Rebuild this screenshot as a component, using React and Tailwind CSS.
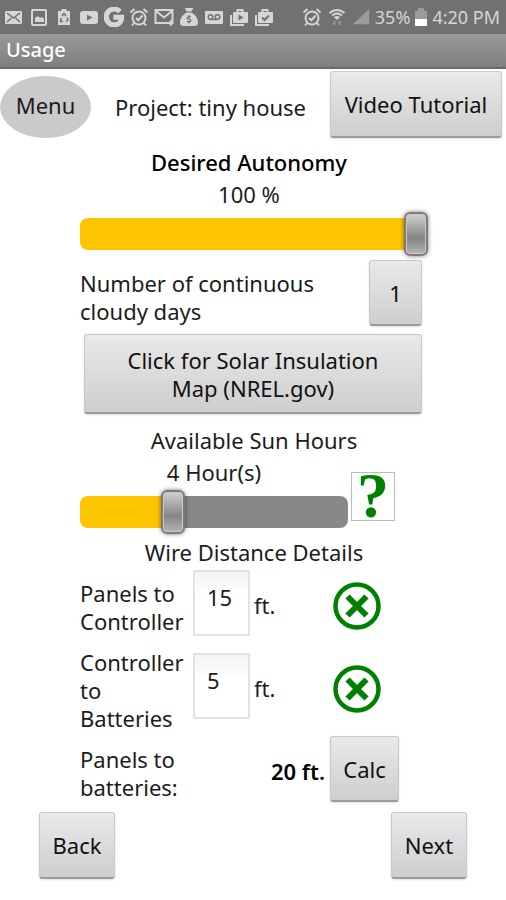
import { useState } from "react";
import { FaGoogle } from "react-icons/fa";
import { FaSackDollar } from "react-icons/fa6";

const buttonClass =
    "rounded-[3px] border border-[#c9c9c9] border-b-2 border-b-[#9c9c9c] bg-linear-to-b from-[#e9e9e9] to-[#cecece] text-[#111] shadow-sm active:from-[#d0d0d0]";

function Alarm() {
    return (
        <svg viewBox="0 0 20 20" className="w-5 h-5" fill="none" stroke="currentColor" strokeWidth="2">
            <circle cx="10" cy="11" r="6.5" />
            <path d="M7 11l2.3 2.3L13.5 8.500M1.500 5.500L5.500 2M18.500 5.500L14.500 2M5 16l-2 2.500M15 16l2 2.500" />
        </svg>
    );
}

function Bag({ children }) {
    return (
        <svg viewBox="0 0 20 20" className="w-5 h-5" fill="none" stroke="currentColor" strokeWidth="2">
            <path d="M2 8v10h13" />
            <path d="M8.500 5V3h5v2" />
            <rect x="4" y="5" width="15" height="11" rx="1" fill="currentColor" stroke="none" />
            {children}
        </svg>
    );
}

function StatusBar() {
    return (
        <div className="h-[34px] pl-1 pr-1.5 flex items-center justify-between bg-[#717171] text-[#d6d6d6] text-lg">
            <div className="flex items-center gap-[5px]">
                <svg viewBox="0 0 20 20" className="w-5 h-5">
                    <rect x="1" y="4" width="17" height="13" rx="1" fill="currentColor" />
                    <path d="M3 6l6.500 5L16 6M3 15l4.500-4M16 15l-4.500-4" fill="none" stroke="#717171" strokeWidth="1.5" />
                </svg>
                <svg viewBox="0 0 20 20" className="w-5 h-5">
                    <rect x="3" y="3" width="14" height="15" rx="1" fill="none" stroke="currentColor" strokeWidth="2" />
                    <path d="M6 15V11l3-2 2 2 2-1 2 2v3z" fill="currentColor" />
                </svg>
                <svg viewBox="0 0 20 20" className="w-5 h-5">
                    <path d="M4 4h3.500V2h5v2H16v14H4z" fill="currentColor" />
                    <path d="M8 9l2-2.500L12 9M13 10.500l1 2.500-2 1.500M9 14.500H6.500L7 11" fill="none" stroke="#717171" strokeWidth="1.5" />
                </svg>
                <svg viewBox="0 0 20 20" className="w-5 h-5">
                    <rect x="1" y="4" width="18" height="13" rx="3" fill="currentColor" />
                    <path d="M8 7.500v6l5.500-3z" fill="#717171" />
                </svg>
                <FaGoogle className="w-5 h-5" stroke="currentColor" strokeWidth="40" />
                <Alarm />
                <svg viewBox="0 0 20 20" className="w-5 h-5" fill="none" stroke="currentColor" strokeWidth="2">
                    <path d="M13 16H1.500V3h17v12M2 4l8 6.500L18 4M12 16h6M16 13.500l2.500 2.500-2.500 2.500" />
                </svg>
                <FaSackDollar className="w-5 h-[18px]" />
                <svg viewBox="0 0 20 20" className="w-5 h-5">
                    <rect x="1" y="4" width="18" height="13" rx="1" fill="currentColor" />
                    <g fill="none" stroke="#717171" strokeWidth="1.5">
                        <circle cx="6.500" cy="10" r="2.300" />
                        <circle cx="13.500" cy="10" r="2.300" />
                        <path d="M6.500 12.500h7" />
                    </g>
                </svg>
                <Bag>
                    <path d="M9.500 7.500v6l5-3z" fill="#717171" stroke="none" />
                </Bag>
                <Bag>
                    <path d="M8 10.500l2.500 2.500L15 8.500" stroke="#717171" />
                </Bag>
            </div>
            <div className="flex items-center gap-[5px] whitespace-nowrap">
                <Alarm />
                <svg viewBox="0 0 20 20" className="w-5 h-5" fill="none" stroke="currentColor" strokeWidth="2">
                    <path d="M2.500 6c4.500-4 10.500-4 15 0M5 8.500c3-2.500 7-2.500 10 0M7.500 11c1.500-1.300 3.500-1.300 5 0" />
                    <path d="M10 11v1.500" />
                    <path d="M7.500 14v4M12.500 14v4" stroke="#9c9c9c" />
                </svg>
                <svg viewBox="0 0 20 20" className="w-[18px] h-5">
                    <path d="M1 18L19 1v17z" fill="#9c9c9c" />
                </svg>
                <span>35%</span>
                <svg viewBox="0 0 12 20" className="w-3 h-5">
                    <path d="M0 4h3V1h6v3h3v8H0z" fill="#9c9c9c" />
                    <path d="M0 12h12v7H0z" fill="#fff" />
                </svg>
                <span>4:20 PM</span>
            </div>
        </div>
    );
}

function Slider({ label, value, max, onChange }) {
    return (
        <input
            type="range"
            aria-label={label}
            min="0"
            max={max}
            value={value}
            onChange={(e) => onChange(Number(e.target.value))}
            style={{ "--fill": `${(value / max) * 100}%` }}
            className="block w-full h-11 appearance-none bg-transparent [&::-webkit-slider-runnable-track]:h-8 [&::-webkit-slider-runnable-track]:rounded-lg [&::-webkit-slider-runnable-track]:bg-[linear-gradient(to_right,#fdc500_var(--fill),#888_var(--fill))] [&::-webkit-slider-thumb]:appearance-none [&::-webkit-slider-thumb]:-mt-1.5 [&::-webkit-slider-thumb]:w-6 [&::-webkit-slider-thumb]:h-11 [&::-webkit-slider-thumb]:rounded-md [&::-webkit-slider-thumb]:border-2 [&::-webkit-slider-thumb]:border-[#7c7c7c] [&::-webkit-slider-thumb]:bg-[linear-gradient(#d0d0d0,#858585_60%,#b4b4b4)] [&::-webkit-slider-thumb]:shadow-[inset_0_0_0_1px_#c8c8c8,0_0_4px_#0008]"
        />
    );
}

function DistanceRow({ id, label, value, onChange, onClear }) {
    return (
        <div className="flex items-center">
            <label htmlFor={id} className="w-[113px] pt-2">{label}</label>
            <input
                id={id}
                value={value}
                onChange={(e) => onChange(e.target.value)}
                className="w-[57px] h-[66px] pl-3 pb-3 border-2 border-[#e2e2e2] bg-linear-to-b from-[#f4f4f4] to-white to-40%"
            />
            <span className="w-[83px] pl-1 pt-1">ft.</span>
            <button type="button" aria-label={`Clear ${id}`} onClick={onClear} className="pt-1.5">
                <svg viewBox="0 0 48 48" className="w-12 h-12" fill="none" stroke="#008000">
                    <circle cx="24" cy="24" r="21.500" strokeWidth="4.500" />
                    <path d="M14.500 14.500l19 19M33.500 14.500l-19 19" strokeWidth="6" />
                </svg>
            </button>
        </div>
    );
}

export default function App() {
    const [autonomy, setAutonomy] = useState(100);
    const [cloudyDays, setCloudyDays] = useState(1);
    const [sunHours, setSunHours] = useState(4);
    const [toController, setToController] = useState("15");
    const [toBatteries, setToBatteries] = useState("5");

    const total = Number(toController) + Number(toBatteries);

    return (
        <div className="min-h-screen bg-white text-[#1c1c1c] font-['Noto_Sans',sans-serif] text-[22px] leading-7">
            <StatusBar />
            <h1 className="h-[35px] px-1.5 border-b-2 border-[#6a6a6a] bg-linear-to-b from-[#9a9a9a] to-[#7e7e7e] text-white text-xl leading-8 font-medium">
                Usage
            </h1>

            <div className="flex items-center justify-between pr-1 pt-0.5">
                <button type="button" className="w-[91px] h-[62px] mt-1 pb-1 rounded-[50%] bg-[#cacaca]">Menu</button>
                <p className="pt-1">Project: tiny house</p>
                <button type="button" className={`${buttonClass} w-[172px] h-[67px]`}>Video Tutorial</button>
            </div>

            <main className="pl-20 pr-[78px] pt-2.5">
                <div className="text-center pr-2.5 pb-1">
                    <h2 className="font-medium text-black">Desired Autonomy</h2>
                    <p className="pt-1">{autonomy} %</p>
                </div>
                <Slider label="Desired Autonomy" value={autonomy} max={100} onChange={setAutonomy} />

                <div className="flex items-center justify-between pt-1 pr-1.5">
                    <p className="w-[250px] pt-2">Number of continuous cloudy days</p>
                    <button
                        type="button"
                        onClick={() => setCloudyDays(cloudyDays + 1)}
                        className={`${buttonClass} w-[53px] h-[66px]`}
                    >
                        {cloudyDays}
                    </button>
                </div>

                <div className="pt-2 pl-1 pr-1.5">
                    <button type="button" className={`${buttonClass} w-full h-20 px-6`}>
                        Click for Solar Insulation Map (NREL.gov)
                    </button>
                </div>

                <h2 className="text-center pt-3">Available Sun Hours</h2>
                <div className="flex items-center pt-1">
                    <div className="w-[268px]">
                        <p className="text-center pb-1">{sunHours} Hour(s)</p>
                        <Slider label="Available Sun Hours" value={sunHours} max={12} onChange={setSunHours} />
                    </div>
                    <button
                        type="button"
                        aria-label="Help"
                        className="w-11 h-[49px] ml-[3px] border border-[#9fd09f] text-[#008000] font-['Liberation_Serif',serif] font-bold text-[64px] leading-11"
                    >
                        ?
                    </button>
                </div>

                <h2 className="text-center pt-1">Wire Distance Details</h2>
                <div className="pt-1">
                    <DistanceRow
                        id="panels-controller"
                        label="Panels to Controller"
                        value={toController}
                        onChange={setToController}
                        onClear={() => setToController("")}
                    />
                    <div className="pt-1">
                        <DistanceRow
                            id="controller-batteries"
                            label="Controller to Batteries"
                            value={toBatteries}
                            onChange={setToBatteries}
                            onClear={() => setToBatteries("")}
                        />
                    </div>
                    <div className="flex items-center pt-1">
                        <p className="w-[120px] pt-2">Panels to batteries:</p>
                        <p className="w-[125px] pt-1 text-right font-semibold text-black">{total} ft.</p>
                        <button type="button" className={`${buttonClass} w-[69px] h-[66px] ml-[5px]`}>Calc</button>
                    </div>
                </div>
            </main>

            <footer className="flex justify-between px-[39px] pt-2.5">
                <button type="button" className={`${buttonClass} w-19 h-[67px]`}>Back</button>
                <button type="button" className={`${buttonClass} w-19 h-[67px]`}>Next</button>
            </footer>
        </div>
    );
}
